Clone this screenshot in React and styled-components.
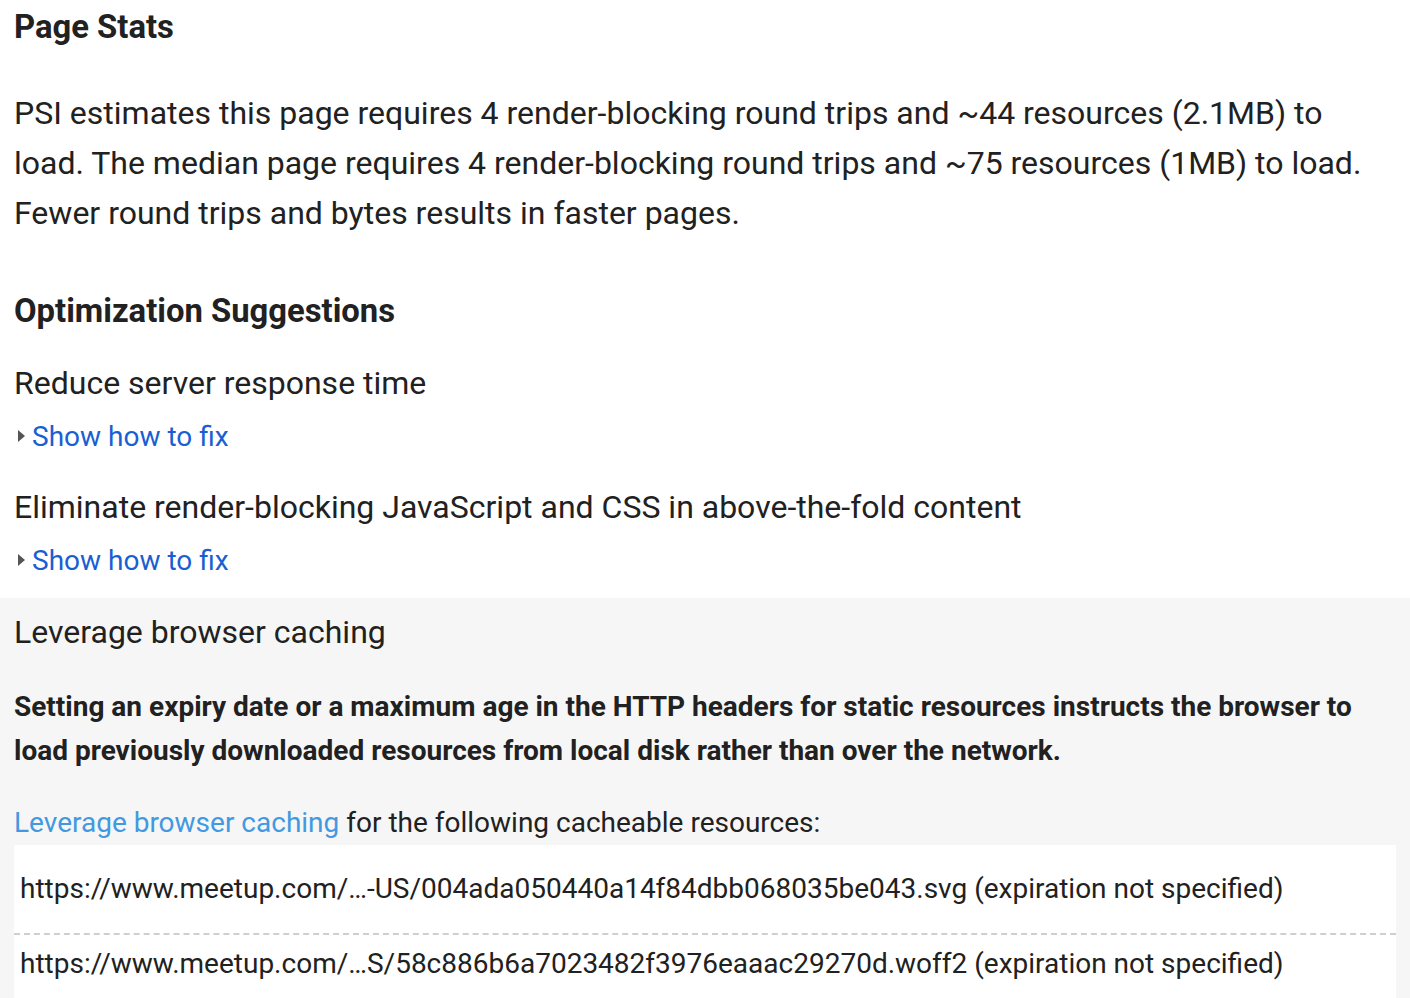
import React from 'react'
import styled, { createGlobalStyle } from 'styled-components'

const GlobalStyle = createGlobalStyle`
  html, body {
    margin: 0;
    padding: 0;
    background: #fff;
  }
  body {
    font-family: Roboto, "Liberation Sans", Arial, sans-serif;
    color: #212121;
  }
`

const Page = styled.div`
  width: 1410px;
  height: 998px;
  overflow: hidden;
`

const Top = styled.div`
  padding: 0 14px;
`

const Heading = styled.h2`
  margin: 0;
  font-size: 32.8px;
  font-weight: 700;
  line-height: 54px;
  padding-top: ${p => p.$top || 0}px;
`

const Para = styled.p`
  margin: 34px 0 0;
  font-size: 32px;
  line-height: 50px;
`

const RuleTitle = styled.div`
  font-size: 32px;
  line-height: 50px;
  margin-top: ${p => p.$top || 0}px;
`

const FixRow = styled.div`
  display: flex;
  align-items: center;
  gap: 7px;
  height: 50px;
  margin-top: 3px;
  padding-left: 4px;
`

const Arrow = styled.span`
  width: 0;
  height: 0;
  border-top: 6px solid transparent;
  border-bottom: 6px solid transparent;
  border-left: 7px solid #555;
`

const FixLink = styled.a`
  font-size: 28px;
  color: #1a5fd2;
  text-decoration: none;
`

const Gray = styled.section`
  margin-top: 13px;
  background: #f6f6f6;
  padding: 9px 14px 0;
  height: 400px;
  box-sizing: border-box;
`

const Strong = styled.p`
  margin: 28px 0 0;
  font-size: 28px;
  font-weight: 700;
  line-height: 44px;
`

const Lead = styled.p`
  margin: 28px 0 0;
  font-size: 28px;
  line-height: 44px;
`

const DocLink = styled.a`
  color: #4299e1;
  text-decoration: none;
`

const UrlList = styled.ul`
  list-style: none;
  margin: 0;
  padding: 0;
  background: #fff;
  height: 200px;
`

const UrlItem = styled.li`
  padding: 0 6px;
  font-size: 28px;
  line-height: 88px;
  height: 88px;
  white-space: nowrap;
  & + & {
    border-top: 2px dashed #cfcfcf;
    line-height: 58px;
    height: 58px;
  }
`

const urls = [
  'https://www.meetup.com/…-US/004ada050440a14f84dbb068035be043.svg (expiration not specified)',
  'https://www.meetup.com/…S/58c886b6a7023482f3976eaaac29270d.woff2 (expiration not specified)',
]

export default function App() {
  return (
    <Page>
      <GlobalStyle />
      <Top>
        <Heading>Page Stats</Heading>
        <Para>
          PSI estimates this page requires 4 render-blocking round trips and ~44 resources (2.1MB) to
          load. The median page requires 4 render-blocking round trips and ~75 resources (1MB) to load.
          Fewer round trips and bytes results in faster pages.
        </Para>
        <Heading $top={46}>Optimization Suggestions</Heading>
        <RuleTitle $top={20}>Reduce server response time</RuleTitle>
        <FixRow>
          <Arrow />
          <FixLink href="#">Show how to fix</FixLink>
        </FixRow>
        <RuleTitle $top={21}>Eliminate render-blocking JavaScript and CSS in above-the-fold content</RuleTitle>
        <FixRow>
          <Arrow />
          <FixLink href="#">Show how to fix</FixLink>
        </FixRow>
      </Top>
      <Gray>
        <RuleTitle>Leverage browser caching</RuleTitle>
        <Strong>
          Setting an expiry date or a maximum age in the HTTP headers for static resources instructs the browser to
          load previously downloaded resources from local disk rather than over the network.
        </Strong>
        <Lead>
          <DocLink href="#">Leverage browser caching</DocLink> for the following cacheable resources:
        </Lead>
        <UrlList>
          {urls.map(u => (
            <UrlItem key={u}>{u}</UrlItem>
          ))}
        </UrlList>
      </Gray>
    </Page>
  )
}
